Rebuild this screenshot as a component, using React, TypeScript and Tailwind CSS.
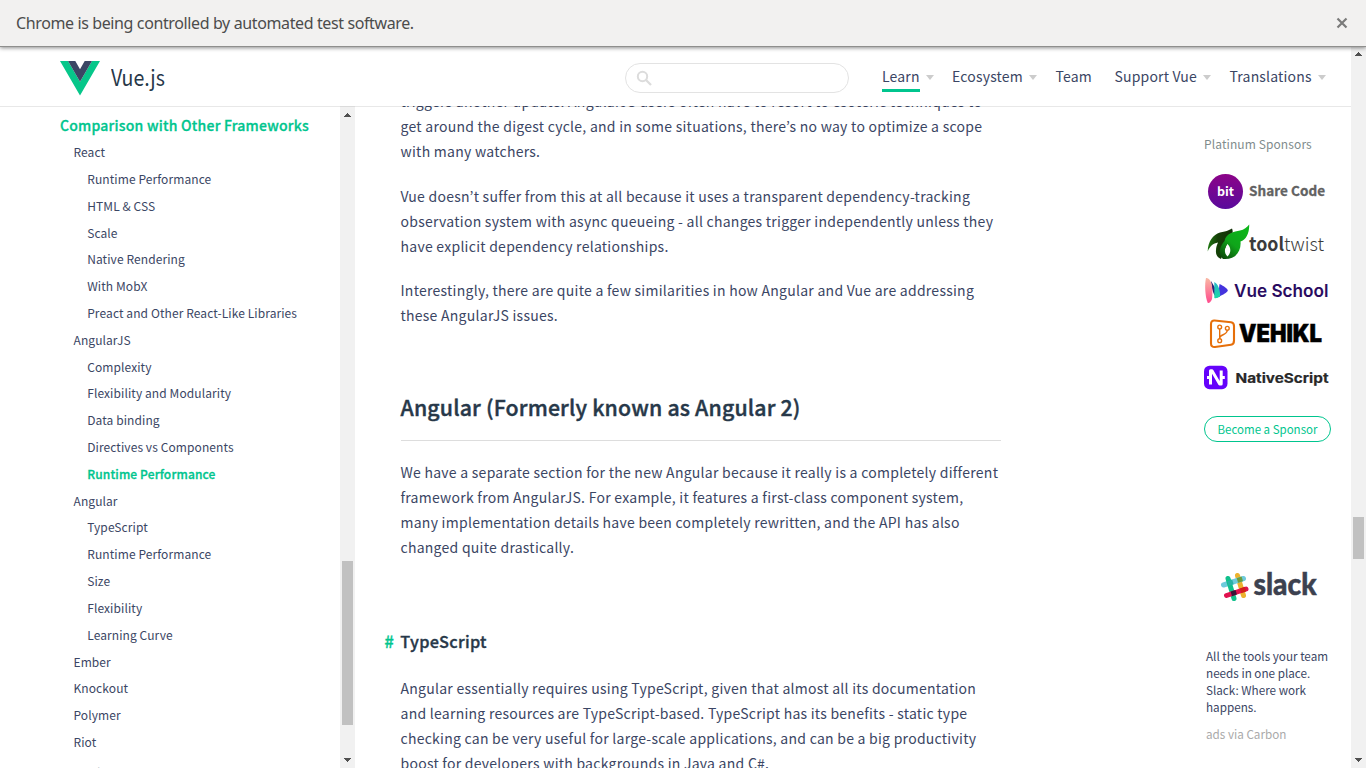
import React from "react";

const sidebar: { label: string; level: 1 | 2; active?: boolean }[] = [
  { label: "React", level: 1 },
  { label: "Runtime Performance", level: 2 },
  { label: "HTML & CSS", level: 2 },
  { label: "Scale", level: 2 },
  { label: "Native Rendering", level: 2 },
  { label: "With MobX", level: 2 },
  { label: "Preact and Other React-Like Libraries", level: 2 },
  { label: "AngularJS", level: 1 },
  { label: "Complexity", level: 2 },
  { label: "Flexibility and Modularity", level: 2 },
  { label: "Data binding", level: 2 },
  { label: "Directives vs Components", level: 2 },
  { label: "Runtime Performance", level: 2, active: true },
  { label: "Angular", level: 1 },
  { label: "TypeScript", level: 2 },
  { label: "Runtime Performance", level: 2 },
  { label: "Size", level: 2 },
  { label: "Flexibility", level: 2 },
  { label: "Learning Curve", level: 2 },
  { label: "Ember", level: 1 },
  { label: "Knockout", level: 1 },
  { label: "Polymer", level: 1 },
  { label: "Riot", level: 1 },
];

function Lines({ lines }: { lines: string[] }) {
  return (
    <p className="whitespace-nowrap text-[14px] leading-[25px] tracking-[0.26px] [font-variant-ligatures:common-ligatures]">
      {lines.map((l) => (
        <span key={l} className="block">{l}</span>
      ))}
    </p>
  );
}

function Arrow({ up }: { up?: boolean }) {
  return (
    <svg width="15" height="15" viewBox="0 0 15 15" className="block shrink-0" shapeRendering="crispEdges">
      {up ? (
        <path d="M7 5h1v1h1v1h1v1h1v1H4V8h1V7h1V6h1z" fill="#505050" />
      ) : (
        <path d="M4 5h7v1h-1v1H9v1H8v1H7V8H6V7H5V6H4z" fill="#505050" />
      )}
    </svg>
  );
}

function Caret() {
  return <span className="block h-0 w-0 border-x-4 border-t-[5px] border-x-transparent border-t-[#ccc]" />;
}

function Nav({ label, width, caret, active }: { label: string; width: string; caret?: boolean; active?: boolean }) {
  return (
    <div className={"flex h-[30px] shrink-0 items-start " + width}>
      <span className={"block h-[30px] whitespace-nowrap text-[14px] leading-[29px] tracking-[0.18px] " + (active ? "border-b-[3px] border-[#00c58e]" : "")}>
        {label}
      </span>
      {caret && <span className="ml-[6px] mt-[13px]"><Caret /></span>}
    </div>
  );
}

function VueLogo() {
  return (
    <svg width="40" height="35" viewBox="0 0 400 350" className="block">
      <path d="M0 0H80L200 207 320 0H400L200 346Z" fill="#06c78a" />
      <path d="M80 0H153L200 82 247 0H320L200 207Z" fill="#3b4664" />
    </svg>
  );
}

function Sponsors() {
  return (
    <svg width="147" height="230" viewBox="0 0 147 230" className="block">
      <defs>
        <linearGradient id="bit" x1="0" y1="0" x2="0" y2="1">
          <stop offset="0" stopColor="#8c0488" /><stop offset="1" stopColor="#5a0a9c" />
        </linearGradient>
        <linearGradient id="tl" x1="0" y1="0" x2="1" y2="0">
          <stop offset="0" stopColor="#1f7a12" /><stop offset="0.4" stopColor="#153f08" /><stop offset="1" stopColor="#123006" />
        </linearGradient>
        <linearGradient id="tr" x1="0" y1="1" x2="0.7" y2="0">
          <stop offset="0" stopColor="#0c3d08" /><stop offset="0.5" stopColor="#0fa51a" /><stop offset="1" stopColor="#0cb51a" />
        </linearGradient>
        <linearGradient id="vs" x1="0" y1="0" x2="0" y2="1">
          <stop offset="0" stopColor="#f9b9a4" /><stop offset="1" stopColor="#ff4a8d" />
        </linearGradient>
        <linearGradient id="vt" x1="0" y1="0" x2="0" y2="1">
          <stop offset="0" stopColor="#2bb5c8" /><stop offset="1" stopColor="#18dba6" />
        </linearGradient>
      </defs>
      {/* bit */}
      <circle cx="21.500" cy="26.500" r="17.500" fill="url(#bit)" />
      <text x="13" y="31" fontSize="12.500" fontWeight="700" fill="#fff" textLength="17">bit</text>
      <text x="45" y="31.300" fontSize="13.500" fontWeight="700" fill="#626262" stroke="#626262" strokeWidth="0.300" textLength="76">Share Code</text>
      {/* tooltwist */}
      <path d="M3.700 86.500C4 76 9 70 16 67.500C21 66.500 25 65.500 28 63.500C29.500 67 28.500 71 25 74L17 94C13 92.500 11.500 89 12 85C12 82 13 80 14 77.500C9 78.500 6 81 3.700 86.500Z" fill="url(#tl)" />
      <path fillRule="evenodd" d="M19 94C13 89 16 81 20.500 76C22 68 30 66.800 36 65.500C40 64.800 43 62.500 45.200 59.500C45.500 68 42 75 36.500 76.500C37.500 87 31 95 19 94ZM23.500 79C20 83 20 88 23.500 91.500C27 88 27.500 83 23.500 79Z" fill="url(#tr)" />
      <text x="45" y="86" fontSize="18.500" fontWeight="700" fill="#3b3b3b" textLength="35" lengthAdjust="spacingAndGlyphs">tool</text>
      <text x="80" y="86" fontSize="18.500" fontWeight="300" fill="#3b3b3b" textLength="40" lengthAdjust="spacingAndGlyphs">twist</text>
      {/* Vue School */}
      <path d="M7 116L16 131C12 135 8 129 7 116Z" fill="#2b2278" />
      <path d="M15.500 119C20 121 23.800 124 23.800 125.500C23.800 127 19 130 14 132Z" fill="#4433dd" />
      <path d="M10.300 117C14 119 16 124 16.200 131C14 133 12 133.500 10.300 133Z" fill="url(#vt)" />
      <path d="M2 113C5 112.500 7.500 117 8 121C8.500 126 8.500 130 8 134C7 137 5 138.500 3.800 138C1 132 0.500 119 2 113Z" fill="url(#vs)" />
      <text x="30" y="131.500" fontSize="17.500" fontWeight="600" fill="#2a0b60" textLength="94.500" lengthAdjust="spacingAndGlyphs" className="font-[Inter,sans-serif]">Vue School</text>
      {/* Vehikl */}
      <path d="M10.500 155.500L27 157.300C29 157.600 30 159 30 161V175.500C30 178 29 179.500 27 179.800L11 182C8.500 182.200 7 181 7 178.500V159C7 156.500 8.500 155.300 10.500 155.500Z" fill="none" stroke="#e66f0a" strokeWidth="2.100" />
      <g fill="none" stroke="#e66f0a" strokeWidth="1.400">
        <circle cx="15.700" cy="162" r="1.900" /><circle cx="23.300" cy="163.300" r="1.900" /><circle cx="15.700" cy="175.700" r="1.900" />
        <path d="M15.700 164V173.700M15.700 173C16 169 23 170.500 23.300 165.300" />
      </g>
      <text x="35" y="177.200" fontSize="24" fontWeight="900" fill="#000" stroke="#000" strokeWidth="0.500" textLength="83" lengthAdjust="spacingAndGlyphs" className="font-[Inter,sans-serif]">VEHIKL</text>
      {/* NativeScript */}
      <rect x="0" y="200.700" width="23.500" height="23.500" rx="5.500" fill="#6502fb" />
      <path d="M6.500 219.500V205.800H8L15.700 219H17.200V205.500M3 212.500H6M17.500 212.500H20.800" fill="none" stroke="#fff" strokeWidth="3" strokeLinejoin="round" />
      <text x="31.500" y="217.500" fontSize="13.500" fontWeight="700" fill="#282828" stroke="#282828" strokeWidth="0.200" textLength="93" lengthAdjust="spacingAndGlyphs" className="font-[Inter,sans-serif]">NativeScript</text>
    </svg>
  );
}

function SlackLogo() {
  return (
    <svg width="120" height="40" viewBox="0 0 120 40" className="block">
      <g strokeWidth="5" strokeLinecap="round">
        <path d="M19.500 7.500L25.500 27.500" stroke="#ecb22e" />
        <path d="M5.500 17L25.500 10.500" stroke="#6ecadc" />
        <path d="M10 10.500L16 30.500" stroke="#10c08c" />
        <path d="M8.500 27.500L28 21" stroke="#e0124f" />
      </g>
      <path d="M9.300 13.200l4.900-1.600 1.400 4.600-4.900 1.600z" fill="#2ab1a6" />
      <path d="M18.700 10.200l4.900-1.600 1.400 4.600-4.900 1.600z" fill="#6b9d3c" />
      <path d="M12.600 23.500l4.900-1.600 1.400 4.700-4.900 1.600z" fill="#3a1438" />
      <path d="M22 20.400l4.900-1.600 1.400 4.700-4.900 1.600z" fill="#d1201a" />
      <text x="35.500" y="27" fontSize="31" fontWeight="900" fill="#3c414f" stroke="#3c414f" strokeWidth="0.500" textLength="63" lengthAdjust="spacingAndGlyphs" className="font-[Lato,sans-serif]">slack</text>
    </svg>
  );
}

export default function App() {
  return (
    <div className="flex h-[768px] w-[1366px] flex-col overflow-hidden bg-white font-['Noto_Sans_CJK_KR',sans-serif] text-[#3b4664]">
      <div className="z-20 flex h-[47px] shrink-0 items-center justify-between border-b border-[#8f8f8d] bg-[#f2f1f0] pl-4 pr-[18px] shadow-[0_1px_4px_rgba(0,0,0,0.45)]">
        <span className="font-['Noto_Sans',sans-serif] text-[16px] tracking-[-0.38px] text-[#4c4c4c]">
          Chrome is being controlled by automated test software.
        </span>
        <svg width="12" height="12" viewBox="0 0 12 12"><path d="M1.500 1.500l9 9M10.500 1.500l-9 9" stroke="#7b7b7a" strokeWidth="2.200" /></svg>
      </div>
      <div className="flex min-h-0 flex-1">
        <div className="flex min-w-0 flex-1 flex-col">
          <header className="z-10 flex h-[59px] shrink-0 items-start pl-[60px] shadow-[0_1px_0_rgba(0,0,0,0.09)]">
            <div className="flex w-[565px] pt-[14px]">
              <VueLogo />
              <span className="ml-[11px] origin-left scale-x-[0.87] text-[22.5px] leading-[30px] text-[#273849]">Vue.js</span>
            </div>
            <div className="mr-[33px] mt-[16px] flex h-[30px] w-[224px] items-center rounded-full border border-[#e3e3e3] pl-[10px]">
              <svg width="16" height="16" viewBox="0 0 16 16" fill="none" stroke="#dcdcdc" strokeWidth="2">
                <circle cx="6.500" cy="6.500" r="4.700" /><path d="M10 10l5 5" strokeWidth="2.300" />
              </svg>
            </div>
            <nav className="flex pt-[15px]">
              <Nav label="Learn" width="w-[70px]" caret active />
              <Nav label="Ecosystem" width="w-[103.5px]" caret />
              <Nav label="Team" width="w-[59px]" />
              <Nav label="Support Vue" width="w-[115px]" caret />
              <Nav label="Translations" width="w-[96px]" caret />
            </nav>
          </header>
          <div className="flex min-h-0 flex-1">
            <aside className="flex w-[355px] shrink-0 overflow-hidden">
              <div className="w-[340px] overflow-hidden whitespace-nowrap pl-[60px] pt-[6.3px]">
                <div className="h-[26px] text-[14px] font-medium leading-[26px] tracking-[0.22px] text-[#00c58e] [-webkit-text-stroke:0.3px_#00c58e]">Comparison with Other Frameworks</div>
                <ul className="pt-[0.8px]">
                  {sidebar.map((s, i) => (
                    <li
                      key={i}
                      className={
                        "h-[26.82px] text-[12px] leading-[26.82px] " +
                        (s.level === 1 ? "pl-[13.5px] " : "pl-[27.2px] ") +
                        (s.active ? "font-medium tracking-[0.14px] text-[#00c58e] [-webkit-text-stroke:0.3px_#00c58e]" : "tracking-[0.09px]")
                      }
                    >
                      {s.label}
                    </li>
                  ))}
                </ul>
                <div className="pt-[4.2px] text-[14px] leading-[26px]">Join the Vue.js Community!</div>
              </div>
              <div className="flex w-[15px] flex-col justify-between bg-[#f1f1f1] pt-[2px]">
                <Arrow up />
                <div className="mx-[2px] mb-[28px] mt-auto h-[164px] bg-[#c1c1c1]" />
                <Arrow />
              </div>
            </aside>
            <main className="w-[849px] overflow-hidden pl-[45.5px]">
              <div className="-mt-[17px] flex flex-col gap-[19.6px]">
                <Lines lines={["triggers another update. AngularJS users often have to resort to esoteric techniques to", "get around the digest cycle, and in some situations, there’s no way to optimize a scope", "with many watchers."]} />
                <Lines lines={["Vue doesn’t suffer from this at all because it uses a transparent dependency-tracking", "observation system with async queueing - all changes trigger independently unless they", "have explicit dependency relationships."]} />
                <Lines lines={["Interestingly, there are quite a few similarities in how Angular and Vue are addressing", "these AngularJS issues."]} />
              </div>
              <h2 className="mt-[63px] h-[50px] w-[600px] border-b border-[#ddd] text-[21.3px] font-medium leading-[32px] tracking-[0.16px] text-[#273849] [-webkit-text-stroke:0.4px_#273849]">Angular (Formerly known as Angular 2)</h2>
              <div className="mt-[19px]">
                <Lines lines={["We have a separate section for the new Angular because it really is a completely different", "framework from AngularJS. For example, it features a first-class component system,", "many implementation details have been completely rewritten, and the API has also", "changed quite drastically."]} />
              </div>
              <h3 className="-ml-[16px] mt-[68px] flex h-[26px] text-[16.3px] font-medium leading-[26px] tracking-[0.32px] text-[#273849] [-webkit-text-stroke:0.35px_currentColor]">
                <span className="w-[15.8px] text-[#00c58e]">#</span><span>TypeScript</span>
              </h3>
              <div className="mt-[22px]">
                <Lines lines={["Angular essentially requires using TypeScript, given that almost all its documentation", "and learning resources are TypeScript-based. TypeScript has its benefits - static type", "checking can be very useful for large-scale applications, and can be a big productivity", "boost for developers with backgrounds in Java and C#."]} />
              </div>
            </main>
            <aside className="flex w-[147px] flex-col overflow-hidden">
              <div className="mt-[28px] h-[20px] text-[12px] leading-[20px] tracking-[0.1px] text-[#7f8c8d]">Platinum Sponsors</div>
              <div className="mt-[11px]"><Sponsors /></div>
              <div className="mt-[21px] flex h-[26px] w-[127px] items-center justify-center rounded-full border border-[#00c58e] text-[11.5px] leading-[20px] text-[#00c58e]">Become a Sponsor</div>
              <div className="ml-[14px] mt-[126px]"><SlackLogo /></div>
              <div className="ml-[2px] mt-[39px] text-[11.7px] leading-[17px]">
                <span className="block">All the tools your team</span>
                <span className="block">needs in one place.</span>
                <span className="block">Slack: Where work</span>
                <span className="block">happens.</span>
              </div>
              <div className="ml-[2px] mt-[10px] text-[11.7px] leading-[17px] text-[#aaa]">ads via Carbon</div>
            </aside>
          </div>
        </div>
        <div className="flex w-[15px] flex-col bg-[#f1f1f1]">
          <Arrow up />
          <div className="mx-[2px] mt-[455px] h-[42px] bg-[#c1c1c1]" />
          <div className="mt-auto"><Arrow /></div>
        </div>
      </div>
    </div>
  );
}
